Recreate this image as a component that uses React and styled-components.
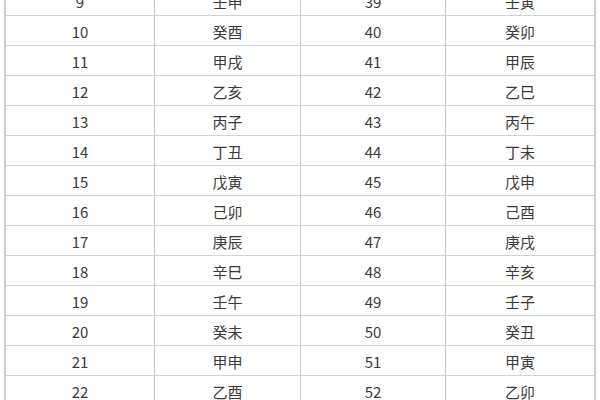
import React from "react";
import styled, { createGlobalStyle } from "styled-components";

const Global = createGlobalStyle`
  html, body { margin: 0; padding: 0; background: #fff; }
  body { width: 600px; height: 400px; overflow: hidden; }
`;

const Page = styled.div`
  width: 600px;
  height: 400px;
  overflow: hidden;
  padding: 0 4px;
  box-sizing: border-box;
`;

const Table = styled.div`
  margin-top: -14px;
  display: grid;
  grid-template-columns: 149px 146px 145px 148px;
  grid-auto-rows: 30px;
  border-left: 2px solid #cfcfcf;
  border-right: 2px solid #cfcfcf;
  font-family: "Noto Sans CJK SC", "Noto Sans", sans-serif;
  font-size: 15px;
  color: #3a3a3a;
`;

const Cell = styled.div`
  display: flex;
  align-items: center;
  justify-content: center;
  box-sizing: border-box;
  border-bottom: 1px solid #d2d2d2;
  border-right: ${(p) => (p.$last ? "none" : "1px solid #c6c6c6")};
  padding-top: 1px;
`;

const left = ["壬申","癸酉","甲戌","乙亥","丙子","丁丑","戊寅","己卯","庚辰","辛巳","壬午","癸未","甲申","乙酉"];
const right = ["壬寅","癸卯","甲辰","乙巳","丙午","丁未","戊申","己酉","庚戌","辛亥","壬子","癸丑","甲寅","乙卯"];

export default function App() {
  return (
    <Page>
      <Global />
      <Table>
        {left.map((name, i) => (
          <React.Fragment key={i}>
            <Cell>{9 + i}</Cell>
            <Cell>{name}</Cell>
            <Cell>{39 + i}</Cell>
            <Cell $last>{right[i]}</Cell>
          </React.Fragment>
        ))}
      </Table>
    </Page>
  );
}
